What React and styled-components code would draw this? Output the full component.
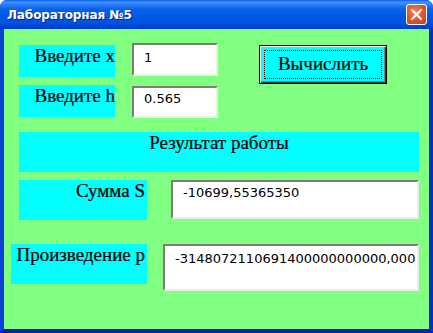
import React from "react";
import styled, { createGlobalStyle } from "styled-components";

const Global = createGlobalStyle`
  html, body { margin: 0; padding: 0; background: #ffffff; }
  body { width: 433px; height: 333px; overflow: hidden; }
`;

const SERIF = `"Liberation Serif", "Times New Roman", "DejaVu Serif", serif`;

const Window = styled.div`
  width: 433px;
  height: 333px;
  box-sizing: border-box;
  display: flex;
  flex-direction: column;
  border-radius: 7px 7px 0 0;
  overflow: hidden;
  background: #0831d9;
`;

const TitleBar = styled.div`
  height: 29px;
  flex: none;
  display: flex;
  align-items: center;
  padding: 0 6px 0 7px;
  box-sizing: border-box;
  background: linear-gradient(
    to bottom,
    #0a5ce8 0px,
    #3d95ff 2px,
    #2a7cf8 5px,
    #0a62ea 9px,
    #0058e6 16px,
    #0054e2 22px,
    #0048d6 26px,
    #003cc4 29px
  );
`;

const Title = styled.span`
  flex: 1;
  color: #ffffff;
  font-family: "DejaVu Sans", "Liberation Sans", sans-serif;
  font-weight: bold;
  font-size: 12px;
  letter-spacing: -0.1px;
  text-shadow: 1px 1px 0 #0a1f8f;
  padding-top: 1px;
`;

const CloseButton = styled.div`
  width: 21px;
  height: 21px;
  box-sizing: border-box;
  border: 1px solid #ffffff;
  border-radius: 3px;
  background: radial-gradient(circle at 40% 35%, #f08a6a 0%, #e0562f 45%, #c6401b 100%);
  display: flex;
  align-items: center;
  justify-content: center;
`;

const Frame = styled.div`
  flex: 1;
  display: flex;
  border-left: 4px solid #0842d8;
  border-right: 4px solid #0630c8;
  border-bottom: 4px solid #0020b0;
`;

const Client = styled.div`
  flex: 1;
  background: #80ff80;
  display: flex;
  flex-direction: column;
`;

const TopSection = styled.div`
  display: flex;
  align-items: flex-start;
  padding-top: 14px;
`;

const FieldColumn = styled.div`
  display: flex;
  flex-direction: column;
  margin-left: 15px;
`;

const FieldRow = styled.div`
  display: flex;
  align-items: flex-start;
  gap: 17px;
  margin-top: ${(p) => p.$top || 0}px;
`;

const Label = styled.div`
  flex: none;
  box-sizing: border-box;
  width: ${(p) => p.$w}px;
  height: ${(p) => p.$h}px;
  margin-top: ${(p) => p.$top || 0}px;
  margin-left: ${(p) => p.$left || 0}px;
  background: #00ffff;
  color: #000000;
  font-family: ${SERIF};
  font-size: 19px;
  line-height: 19px;
  -webkit-text-stroke: 0.2px #000000;
  padding-top: 1px;
  padding-right: ${(p) => p.$pr || 0}px;
  text-align: ${(p) => p.$align || "right"};
  white-space: nowrap;
  overflow: hidden;
`;

const Edit = styled.div`
  flex: none;
  box-sizing: border-box;
  width: ${(p) => p.$w}px;
  height: ${(p) => p.$h}px;
  margin-top: ${(p) => p.$top || 0}px;
  margin-left: ${(p) => p.$left || 0}px;
  background: #ffffff;
  border-top: 2px solid #7f7d73;
  border-left: 2px solid #7f7d73;
  border-bottom: 2px solid #ecebe4;
  border-right: 2px solid #ecebe4;
  padding: ${(p) => p.$pt}px 0 0 10px;
  font-family: "DejaVu Sans", "Liberation Sans", sans-serif;
  font-size: 13px;
  line-height: 15px;
  color: #000000;
  white-space: nowrap;
  overflow: hidden;
`;

const Button = styled.div`
  flex: none;
  box-sizing: border-box;
  width: 128px;
  height: 39px;
  margin-left: 41px;
  margin-top: 2px;
  border: 1px solid #000000;
  background: #00ffff;
  box-shadow: inset 1px 1px 0 #ffffff, inset -1px -1px 0 #404040, inset -2px -2px 0 #808080;
  display: flex;
  padding: 4px;
`;

const FocusRect = styled.div`
  flex: 1;
  border: 1px dotted #000000;
  display: flex;
  align-items: center;
  justify-content: center;
  font-family: ${SERIF};
  font-size: 19px;
  -webkit-text-stroke: 0.2px #000000;
  color: #000000;
  padding-bottom: 1px;
`;

const Row = styled.div`
  display: flex;
  align-items: flex-start;
  margin-top: ${(p) => p.$top}px;
`;

export default function App() {
  return (
    <>
      <Global />
      <Window>
        <TitleBar>
          <Title>Лабораторная №5</Title>
          <CloseButton>
            <svg width="13" height="13" viewBox="0 0 13 13">
              <path d="M2 2 L11 11 M11 2 L2 11" stroke="#ffffff" strokeWidth="2.2" strokeLinecap="square" />
            </svg>
          </CloseButton>
        </TitleBar>
        <Frame>
          <Client>
            <TopSection>
              <FieldColumn>
                <FieldRow>
                  <Label $w={96} $h={32} $top={2}>Введите x</Label>
                  <Edit $w={86} $h={33} $pt={5}>1</Edit>
                </FieldRow>
                <FieldRow $top={8}>
                  <Label $w={96} $h={32}>Введите h</Label>
                  <Edit $w={86} $h={32} $top={1} $pt={3}>0.565</Edit>
                </FieldRow>
              </FieldColumn>
              <Button>
                <FocusRect>Вычислить</FocusRect>
              </Button>
            </TopSection>
            <Row $top={14}>
              <Label $w={400} $h={40} $left={15} $align="center">Результат работы</Label>
            </Row>
            <Row $top={8}>
              <Label $w={128} $h={40} $left={15} $pr={2}>Сумма S</Label>
              <Edit $w={248} $h={39} $left={24} $pt={3}>-10699,55365350</Edit>
            </Row>
            <Row $top={24}>
              <Label $w={136} $h={40} $left={7} $pr={2}>Произведение p</Label>
              <Edit $w={256} $h={47} $left={16} $pt={5}>-3148072110691400000000000,000</Edit>
            </Row>
          </Client>
        </Frame>
      </Window>
    </>
  );
}
